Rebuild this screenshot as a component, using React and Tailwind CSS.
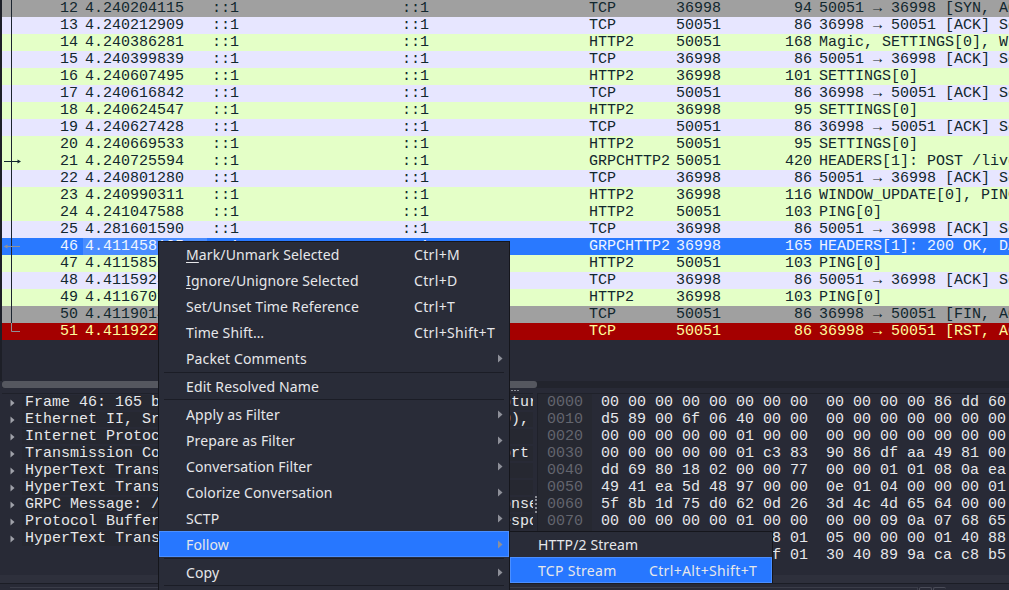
import { Fragment } from "react";

const ACK_OUT = "36998 → 50051 [ACK] Seq=1 Ack=1 Win=65536 Len=0";
const ACK_IN = "50051 → 36998 [ACK] Seq=1 Ack=1 Win=65536 Len=0";

const ROW_STYLES = {
  gray: "bg-[#a0a0a0] text-[#12272e]",
  tcp: "bg-[#e7e6ff] text-[#12272e]",
  http: "bg-[#e4ffc7] text-[#12272e]",
  selected: "bg-[#2979ff] text-[#eef4ff]",
  red: "bg-[#a40000] text-[#fffc9c]",
};

const PACKETS = [
  [12, "4.240204115", "TCP", 36998, 94, "50051 → 36998 [SYN, ACK] Seq=0 Ack=1", "gray"],
  [13, "4.240212909", "TCP", 50051, 86, ACK_OUT, "tcp"],
  [14, "4.240386281", "HTTP2", 50051, 168, "Magic, SETTINGS[0], WINDOW_UPDATE[0]", "http"],
  [15, "4.240399839", "TCP", 36998, 86, ACK_IN, "tcp"],
  [16, "4.240607495", "HTTP2", 36998, 101, "SETTINGS[0]", "http"],
  [17, "4.240616842", "TCP", 50051, 86, ACK_OUT, "tcp"],
  [18, "4.240624547", "HTTP2", 36998, 95, "SETTINGS[0]", "http"],
  [19, "4.240627428", "TCP", 50051, 86, ACK_OUT, "tcp"],
  [20, "4.240669533", "HTTP2", 50051, 95, "SETTINGS[0]", "http"],
  [21, "4.240725594", "GRPCHTTP2", 50051, 420, "HEADERS[1]: POST /livestream", "http", "out"],
  [22, "4.240801280", "TCP", 36998, 86, ACK_IN, "tcp"],
  [23, "4.240990311", "HTTP2", 36998, 116, "WINDOW_UPDATE[0], PING[0]", "http"],
  [24, "4.241047588", "HTTP2", 50051, 103, "PING[0]", "http"],
  [25, "4.281601590", "TCP", 36998, 86, ACK_IN, "tcp"],
  [46, "4.411458105", "GRPCHTTP2", 36998, 165, "HEADERS[1]: 200 OK, DATA[1]", "selected", "in"],
  [47, "4.411585210", "HTTP2", 50051, 103, "PING[0]", "http"],
  [48, "4.411592340", "TCP", 36998, 86, ACK_IN, "tcp"],
  [49, "4.411670120", "HTTP2", 36998, 103, "PING[0]", "http"],
  [50, "4.411901450", "TCP", 50051, 86, "36998 → 50051 [FIN, ACK] Seq=1", "gray"],
  [51, "4.411922760", "TCP", 50051, 86, "36998 → 50051 [RST, ACK] Seq=2", "red", "end"],
];

const TREE = [
  "Frame 46: 165 bytes on wire (1320 bits), 165 bytes captured",
  "Ethernet II, Src: 00:00:00_00:00:00 (00:00:00:00:00:00), Dst",
  "Internet Protocol Version 6, Src: ::1, Dst: ::1",
  "Transmission Control Protocol, Src Port: 50051, Dst Port",
  "HyperText Transfer Protocol 2",
  "HyperText Transfer Protocol 2",
  "GRPC Message: /livestream.LiveStreams/Subscribe, Response",
  "Protocol Buffers: /livestream.LiveStream/Subscribe, Response",
  "HyperText Transfer Protocol 2",
];

const HEX = [
  ["0000", "00 00 00 00 00 00 00 00", "00 00 00 00 86 dd 60"],
  ["0010", "d5 89 00 6f 06 40 00 00", "00 00 00 00 00 00 00"],
  ["0020", "00 00 00 00 00 01 00 00", "00 00 00 00 00 00 00"],
  ["0030", "00 00 00 00 00 01 c3 83", "90 86 df aa 49 81 00"],
  ["0040", "dd 69 80 18 02 00 00 77", "00 00 01 01 08 0a ea"],
  ["0050", "49 41 ea 5d 48 97 00 00", "0e 01 04 00 00 00 01"],
  ["0060", "5f 8b 1d 75 d0 62 0d 26", "3d 4c 4d 65 64 00 00"],
  ["0070", "00 00 00 00 00 01 00 00", "00 00 09 0a 07 68 65"],
  ["0080", "00 00 00 00 00 00 88 01", "05 00 00 00 01 40 88"],
  ["0090", "00 00 00 00 00 00 0f 01", "30 40 89 9a ca c8 b5"],
];

function MenuArrow() {
  return (
    <svg width="6" height="9" viewBox="0 0 6 9" className="shrink-0">
      <path d="M1 0.5 L5.5 4.5 L1 8.5 Z" fill="#8e9099" />
    </svg>
  );
}

function TreeArrow() {
  return (
    <svg width="5" height="8" viewBox="0 0 5 8" className="shrink-0">
      <path d="M0.5 0.5 L4.5 4 L0.5 7.5 Z" fill="#a0a2aa" />
    </svg>
  );
}

// conversation line + related packet arrows in the first column
function RelatedMark({ kind }) {
  const soft = "#8f9096";
  return (
    <svg width="20" height="17" viewBox="0 0 20 17" className="shrink-0">
      {kind === "end" ? (
        <Fragment>
          <path d="M9.5 0 V8.5 H18" stroke={soft} fill="none" />
        </Fragment>
      ) : (
        <path d="M9.5 0 V17" stroke={kind === "in" ? "#1f2230" : "#1c2530"} />
      )}
      {kind === "out" && (
        <Fragment>
          <path d="M2 8.5 H16" stroke="#12272e" />
          <path d="M15.5 6.5 L19 8.5 L15.5 10.5 Z" fill="#12272e" />
        </Fragment>
      )}
      {kind === "in" && (
        <Fragment>
          <path d="M4 8.5 H18" stroke={soft} />
          <path d="M5.5 6.5 L1.5 8.5 L5.5 10.5 Z" fill={soft} />
        </Fragment>
      )}
    </svg>
  );
}

function PacketRow({ no, time, proto, port, length, info, tone, mark }) {
  const selected = tone === "selected";
  return (
    <div className={`flex h-[17px] leading-[17px] whitespace-pre ${ROW_STYLES[tone]}`}>
      <RelatedMark kind={mark} />
      <div className="w-[61px] shrink-0 pr-[5px] text-right">{no}</div>
      <div className={`w-[124px] shrink-0 pl-[2px] ${selected ? "bg-[#4a8dff]" : ""}`}>{time}</div>
      <div className="w-[190px] shrink-0 pl-[5px]">::1</div>
      <div className="w-[187px] shrink-0 pl-[5px]">::1</div>
      <div className="w-[87px] shrink-0 pl-[5px]">{proto}</div>
      <div className="w-[89px] shrink-0 pl-[5px]">{port}</div>
      <div className="w-[57px] shrink-0 pr-[5px] text-right">{length}</div>
      <div className="min-w-0 flex-1 overflow-hidden pl-[2px]">{info}</div>
    </div>
  );
}

function MenuItem({ label, mnemonic, shortcut, arrow, active }) {
  const tone = active
    ? "bg-[#2777ff] outline outline-1 -outline-offset-1 outline-[#4c8fff]"
    : "";
  return (
    <div className={`flex h-[26px] items-center pl-[27px] pr-[6px] ${tone}`}>
      <span className="w-[228px] shrink-0 whitespace-pre tracking-[0.12px]">
        {mnemonic ? <span className="underline underline-offset-2">{mnemonic}</span> : null}
        {label}
      </span>
      <span className="flex-1 whitespace-pre tracking-[0.35px]">{shortcut}</span>
      {arrow ? <MenuArrow /> : null}
    </div>
  );
}

function MenuSeparator({ className }) {
  return <div className={`mx-[5px] h-px bg-[#1b1d26] ${className}`} />;
}

function ContextMenu() {
  return (
    <div className="absolute left-[158px] top-[241px] z-10 h-[360px] w-[352px] border border-[#15161c] bg-[#292c38] font-['Noto_Sans',sans-serif] text-[14px] text-[#e6e7ea]">
      <div className="-mt-px">
        <MenuItem mnemonic="M" label="ark/Unmark Selected" shortcut="Ctrl+M" />
        <MenuItem mnemonic="I" label="gnore/Unignore Selected" shortcut="Ctrl+D" />
        <MenuItem label="Set/Unset Time Reference" shortcut="Ctrl+T" />
        <MenuItem label="Time Shift…" shortcut="Ctrl+Shift+T" />
        <MenuItem label="Packet Comments" arrow />
        <MenuSeparator className="mt-[1px]" />
        <MenuItem label="Edit Resolved Name" />
        <MenuSeparator className="mb-[1px]" />
        <MenuItem label="Apply as Filter" arrow />
        <MenuItem label="Prepare as Filter" arrow />
        <MenuItem label="Conversation Filter" arrow />
        <MenuItem label="Colorize Conversation" arrow />
        <MenuItem label="SCTP" arrow />
        <MenuItem label="Follow" arrow active />
        <MenuSeparator className="mt-[1px]" />
        <MenuItem label="Copy" arrow />
        <MenuSeparator />
      </div>
    </div>
  );
}

function FollowSubmenu() {
  return (
    <div className="absolute left-[510px] top-[531px] z-20 w-[263px] border-t border-r border-[#15161c] bg-[#292c38] font-['Noto_Sans',sans-serif] text-[14px] text-[#e6e7ea]">
      <div className="-mt-px">
        <div className="flex h-[26px] items-center pl-[28px] tracking-[0.12px]">HTTP/2 Stream</div>
        <div className="flex h-[26px] items-center bg-[#2777ff] pl-[28px] outline outline-1 -outline-offset-1 outline-[#4c8fff]">
          <span className="w-[111px] shrink-0 tracking-[0.3px]">TCP Stream</span>
          <span className="tracking-[0.35px]">Ctrl+Alt+Shift+T</span>
        </div>
      </div>
    </div>
  );
}

export default function App() {
  return (
    <div className="relative flex h-[590px] w-[1009px] flex-col overflow-hidden bg-[#282a36] font-['Liberation_Mono',monospace] text-[15px]">
      <div className="h-[381px] shrink-0 overflow-hidden border-l-2 border-[#1d1f27]">
        {PACKETS.map(([no, time, proto, port, length, info, tone, mark]) => (
          <PacketRow
            key={no}
            no={no}
            time={time}
            proto={proto}
            port={port}
            length={length}
            info={info}
            tone={tone}
            mark={mark}
          />
        ))}
      </div>

      <div className="ml-[2px] h-[7px] shrink-0 bg-[#22242d]">
        <div className="h-full w-[535px] rounded-[3px] bg-[#55575f]" />
      </div>

      <div className="flex h-[5px] shrink-0 items-center pl-[511px]">
        <div className="flex gap-[1px]">
          <span className="h-px w-[2px] bg-[#8a8c94]" />
          <span className="h-px w-[2px] bg-[#8a8c94]" />
          <span className="h-px w-[2px] bg-[#8a8c94]" />
        </div>
      </div>

      <div className="flex min-h-0 flex-1 pl-[2px] text-[#e6e7ea]">
        <div className="w-[531px] shrink-0 overflow-hidden border-t border-[#1f212a]">
          {TREE.map((line, i) => (
            <div key={i} className="flex h-[17px] items-center leading-[15px] whitespace-pre">
              <div className="flex w-[20px] shrink-0 justify-center">
                <TreeArrow />
              </div>
              <div className="flex-1 overflow-hidden bg-[#262831] pl-[3px]">{line}</div>
            </div>
          ))}
        </div>

        <div className="flex w-[4px] shrink-0 flex-col items-end pt-[103px]">
          <div className="h-[17px] border-l-2 border-dotted border-[#8a8c94]" />
        </div>

        <div className="min-w-0 flex-1 overflow-hidden border-t border-l border-[#1f212a]">
          {HEX.map(([offset, left, right]) => (
            <div key={offset} className="flex h-[17px] leading-[17px] whitespace-pre">
              <div className="w-[54px] shrink-0 bg-[#262831] pl-[9px] text-[#63656e]">{offset}</div>
              <div className="w-[234px] shrink-0 pl-[9px]">{left}</div>
              <div>{right}</div>
            </div>
          ))}
        </div>
      </div>

      <div className="h-[8px] shrink-0 bg-[#2e303c]" />
      <div className="flex h-[7px] shrink-0 items-start gap-[1px] border-t border-[#1b1d25] pl-[10px] pt-[3px]">
        <div className="h-[4px] w-[245px] border-t border-r border-[#3b3d49]" />
        <div className="h-[4px] w-[662px] border-t border-r border-[#3b3d49]" />
        <div className="h-[4px] w-[13px] rounded-t-[2px] border-t border-r border-l border-[#4a4c58]" />
        <div className="h-[4px] w-[13px] rounded-t-[2px] border-t border-l border-[#4a4c58]" />
      </div>

      <ContextMenu />
      <FollowSubmenu />
    </div>
  );
}
